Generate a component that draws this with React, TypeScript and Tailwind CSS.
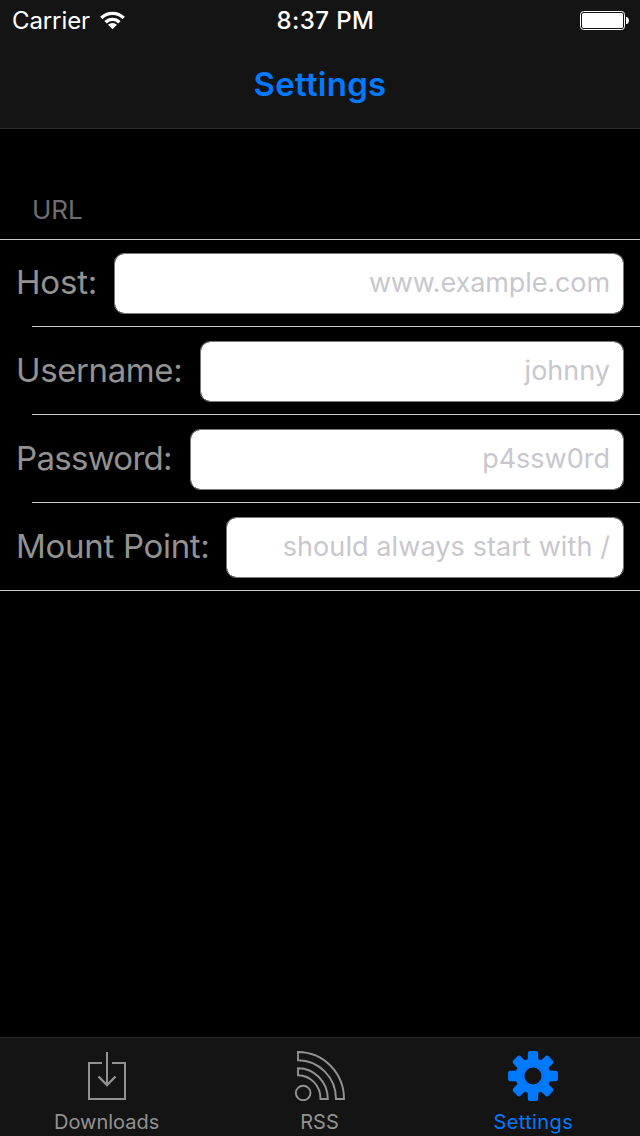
import React from 'react';

const rows = [
  { label: 'Host:', hint: 'www.example.com', field: 'w-[510px]', labelTracking: 'tracking-[-0.2px]', hintTracking: 'tracking-[-0.1px]', height: 'h-[86px]', labelPad: 'pb-0' },
  { label: 'Username:', hint: 'johnny', field: 'w-[424px]', labelTracking: 'tracking-[-0.4px]', hintTracking: 'tracking-[0px]', height: 'h-[87px] pt-[2px]', labelPad: 'pb-[2px]' },
  { label: 'Password:', hint: 'p4ssw0rd', field: 'w-[434px]', labelTracking: 'tracking-[-0.7px]', hintTracking: 'tracking-[0px]', height: 'h-[87px] pt-[2px]', labelPad: 'pb-[2px]' },
  { label: 'Mount Point:', hint: 'should always start with /', field: 'w-[398px]', labelTracking: 'tracking-[-0.3px]', hintTracking: 'tracking-[0.1px]', height: 'h-[87px] pt-[2px]', labelPad: 'pb-[2px]' },
];

function DownloadIcon() {
  return (
    <svg width="50" height="50" viewBox="0 0 50 50" fill="none" stroke="currentColor" strokeWidth="2">
      <path d="M20 12H7v36h36V12H30" />
      <path d="M25 1v34" />
      <path d="M16.5 25.500l8.500 8.500 8.500-8.500" strokeWidth="2.400" />
    </svg>
  );
}

function RssIcon() {
  return (
    <svg width="50" height="50" viewBox="0 0 50 50" fill="none" stroke="currentColor" strokeWidth="1.900">
      <circle cx="8.200" cy="42" r="7.300" />
      <path d="M3 1v8.300A38 38.500 0 0 1 41 48h8A46 47 0 0 0 3 1z" />
      <path d="M3 17.200v7A22.500 23.500 0 0 1 25.500 48h7.300A29.800 30.800 0 0 0 3 17.200z" />
    </svg>
  );
}

const angles = [0, 45, 90, 135, 180, 225, 270, 315];

function GearIcon() {
  return (
    <svg width="50" height="50" viewBox="0 0 50 50">
      <g fill="currentColor">
        {angles.map((a) => (
          <path key={a} transform={`rotate(${a} 25 25)`} d="M17.800 12q2-2 2-5V2.500Q19.800 0 22.300 0h5.400q2.500 0 2.500 2.500V7q0 3 2 5z" />
        ))}
        <circle cx="25" cy="25" r="17.500" />
      </g>
      <g fill="none" stroke="#0b69cd" strokeWidth="0.6">
        <circle cx="25" cy="25" r="10.500" />
        {angles.map((a) => (
          <path key={a} transform={`rotate(${a} 25 25)`} d="M22 2h6" />
        ))}
      </g>
      <circle cx="25" cy="25" r="8.500" fill="#141414" />
    </svg>
  );
}

export default function App() {
  return (
    <div className="flex h-[1136px] w-[640px] flex-col overflow-hidden bg-black font-['Inter',sans-serif]">
      <header className="flex h-[129px] shrink-0 flex-col border-b border-[#2a2a2a] bg-[#141414]">
        <div className="grid h-[42px] shrink-0 grid-cols-3 items-center text-[24px] leading-[42px] text-white">
          <div className="flex items-center gap-[10px] pl-3">
            <span className="tracking-[-0.1px]">Carrier</span>
            <svg width="25" height="20" viewBox="0 0 25 20" fill="none" stroke="white" strokeWidth="3.4">
              <path d="M1.300 7a15.800 15.800 0 0 1 22.400 0M5.600 11.300a9.700 9.700 0 0 1 13.800 0" />
              <path d="M12.500 18.300l-4.500-4.500a6.300 6.300 0 0 1 9 0z" fill="white" stroke="none" />
            </svg>
          </div>
          <span className="pl-[11px] text-center font-medium tracking-[0.450px]">8:37 PM</span>
          <svg className="mr-[11px] justify-self-end" width="49" height="20" viewBox="0 0 49 20">
            <rect x=".5" y=".5" width="44" height="18" rx="3" fill="none" stroke="white" />
            <rect x="2" y="2" width="41" height="15" rx="1.5" fill="white" />
            <path d="M46 6h1q2 1 2 3.500t-2 3.500h-1z" fill="white" />
          </svg>
        </div>
        <h1 className="flex h-[86px] items-center justify-center text-[33px] font-semibold tracking-[0.250px] text-[#007aff]">Settings</h1>
      </header>
      <main className="flex-1">
        <h2 className="h-[110px] pl-8 pt-[63px] text-[26px] leading-[36px] text-[#6d6d72]">URL</h2>
        <form className="border-y border-[#c8c7cc]">
          {rows.map((r, i) => (
            <React.Fragment key={r.label}>
              {i > 0 && <div className="ml-8 h-px bg-[#c8c7cc]" />}
              <label className={`flex items-center justify-between pl-4 pr-4 ${r.height}`}>
                <span className={`shrink-0 whitespace-nowrap text-[33px] text-[#929292] ${r.labelPad} ${r.labelTracking}`}>{r.label}</span>
                <input placeholder={r.hint} className={`h-[61px] min-w-0 rounded-[10px] border border-[#777] bg-white bg-clip-padding px-[13px] pb-[2px] text-right text-[27px] placeholder:text-[#c7c7cd] ${r.field} ${r.hintTracking}`} />
              </label>
            </React.Fragment>
          ))}
        </form>
      </main>
      <nav className="grid h-[99px] grid-cols-3 border-t border-[#2a2a2a] bg-[#141414] text-[20px] leading-[24px] text-[#929292]">
        <div className="flex flex-col items-center gap-[9px] pt-[13px]">
          <DownloadIcon />
          <span>Downloads</span>
        </div>
        <div className="flex flex-col items-center gap-[9px] pt-[13px]">
          <RssIcon />
          <span className="pr-px">RSS</span>
        </div>
        <div className="flex flex-col items-center gap-[9px] pt-[13px] text-[#007aff]">
          <GearIcon />
          <span className="tracking-[0.400px]">Settings</span>
        </div>
      </nav>
    </div>
  );
}
